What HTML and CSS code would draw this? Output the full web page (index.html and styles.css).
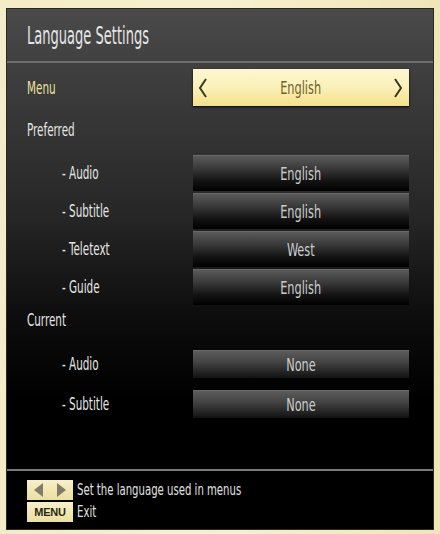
FILE: index.html
```html
<!DOCTYPE html>
<html>
<head>
<meta charset="utf-8">
<link rel="stylesheet" href="styles.css">
</head>
<body>
<div class="panel">
  <div class="titlebar"><span class="title">Language Settings</span></div>
  <div class="content">
    <div class="row menu-row">
      <div class="label"><span class="lbl lbl-menu">Menu</span></div>
      <div class="box box-active">
        <svg class="chev" width="10" height="20" viewBox="0 0 10 20"><polyline points="8,1 2,10 8,19" fill="none" stroke="#3a3820" stroke-width="2"/></svg>
        <span class="value">English</span>
        <svg class="chev" width="10" height="20" viewBox="0 0 10 20"><polyline points="2,1 8,10 2,19" fill="none" stroke="#3a3820" stroke-width="2"/></svg>
      </div>
    </div>
    <div class="row section-row"><div class="label"><span class="lbl">Preferred</span></div></div>
    <div class="row sub-row">
      <div class="label sub"><span class="lbl">- Audio</span></div>
      <div class="box"><span class="value">English</span></div>
    </div>
    <div class="row sub-row">
      <div class="label sub"><span class="lbl">- Subtitle</span></div>
      <div class="box"><span class="value">English</span></div>
    </div>
    <div class="row sub-row">
      <div class="label sub"><span class="lbl">- Teletext</span></div>
      <div class="box"><span class="value">West</span></div>
    </div>
    <div class="row sub-row">
      <div class="label sub"><span class="lbl">- Guide</span></div>
      <div class="box"><span class="value">English</span></div>
    </div>
    <div class="row current-row"><div class="label"><span class="lbl">Current</span></div></div>
    <div class="row cur-sub">
      <div class="label sub"><span class="lbl">- Audio</span></div>
      <div class="box box-flat"><span class="value">None</span></div>
    </div>
    <div class="row cur-sub">
      <div class="label sub"><span class="lbl">- Subtitle</span></div>
      <div class="box box-flat"><span class="value">None</span></div>
    </div>
  </div>
  <div class="footer">
    <div class="hint">
      <span class="key key-arrows">
        <svg width="40" height="16" viewBox="0 0 40 16"><polygon points="13,1 13,15 4,8" fill="#807c6a"/><polygon points="27,1 27,15 36,8" fill="#807c6a"/></svg>
      </span>
      <span class="hint-text">Set the language used in menus</span>
    </div>
    <div class="hint">
      <span class="key key-menu">MENU</span>
      <span class="hint-text">Exit</span>
    </div>
  </div>
</div>
</body>
</html>
```
FILE: styles.css
```css
html, body {
  margin: 0;
  padding: 0;
}
body {
  width: 440px;
  height: 534px;
  background: linear-gradient(90deg, #f3ecc6, #f7f0cf 50%, #efe6b8);
  font-family: "DejaVu Sans Condensed", "DejaVu Sans", sans-serif;
  overflow: hidden;
}
.panel {
  box-sizing: border-box;
  width: 428px;
  height: 522px;
  margin: 8px 0 0 6px;
  display: flex;
  flex-direction: column;
  background: linear-gradient(180deg, #4a4a4a 0%, #3c3c3c 15%, #262626 40%, #0c0c0c 60%, #000 75%, #000 100%);
  border: 1px solid #2a2a22;
}
.titlebar {
  height: 52px;
  display: flex;
  align-items: center;
  padding-left: 20px;
  border-bottom: 2px solid #6e6e6e;
  flex: none;
}
.title {
  color: #e6e6e6;
  font-size: 25px;
  display: inline-block;
  transform: scaleX(0.58);
  transform-origin: left center;
  white-space: nowrap;
}
.content {
  flex: 1;
  display: flex;
  flex-direction: column;
  padding: 5px 24px 0 20px;
}
.row {
  display: flex;
  align-items: center;
  flex: none;
}
.label {
  flex: 1;
}
.lbl {
  display: inline-block;
  color: #e6e6e6;
  font-size: 17px;
  transform: scaleX(0.68);
  transform-origin: left center;
  white-space: nowrap;
}
.lbl-menu {
  color: #ebe29c;
}
.sub {
  padding-left: 35px;
}
.menu-row {
  height: 37px;
  margin-top: 1px;
}
.section-row {
  height: 44px;
  margin-top: 2px;
}
.sub-row {
  height: 36px;
  margin-top: 2px;
}
.section-row + .sub-row {
  margin-top: 3px;
}
.current-row {
  height: 30px;
  margin-top: 0;
}
.cur-sub {
  height: 28px;
  margin-top: 12px;
}
.current-row + .cur-sub {
  margin-top: 15px;
}
.box {
  width: 216px;
  height: 100%;
  box-sizing: border-box;
  display: flex;
  align-items: center;
  justify-content: center;
  background: linear-gradient(180deg, #5a5a5a 0%, #3a3a3a 35%, #141414 70%, #000 100%);
  border-top: 1px solid #6a6a6a;
}
.box-flat {
  background: linear-gradient(180deg, #5c5c5c 0%, #444 40%, #222 80%, #111 100%);
}
.value {
  display: inline-block;
  color: #cccccc;
  font-size: 17px;
  transform: scaleX(0.74);
  white-space: nowrap;
}
.box-active {
  justify-content: space-between;
  padding: 0 6px 0 5px;
  background: linear-gradient(180deg, #fdf7d2 0%, #faf0b8 50%, #f3e28a 100%);
  border: none;
  box-shadow: 0 1px 2px #000;
}
.box-active .value {
  color: #6e6228;
}
.chev {
  display: block;
}
.footer {
  height: 60px;
  flex: none;
  border-top: 2px solid #7a7a7a;
  box-sizing: border-box;
  padding: 9px 0 0 20px;
  display: flex;
  flex-direction: column;
  gap: 2px;
}
.hint {
  display: flex;
  align-items: center;
  gap: 4px;
  height: 20px;
}
.key {
  width: 46px;
  height: 20px;
  flex: none;
  box-sizing: border-box;
  display: flex;
  align-items: center;
  justify-content: center;
  background: linear-gradient(180deg, #f8f0c8, #ebdf9e);
}
.key-menu {
  font-family: "Liberation Sans", sans-serif;
  font-weight: bold;
  font-size: 11px;
  color: #2a2818;
  letter-spacing: -0.2px;
}
.hint-text {
  display: inline-block;
  color: #e0e0e0;
  font-size: 15px;
  transform: scaleX(0.75);
  transform-origin: left center;
  white-space: nowrap;
}
```
